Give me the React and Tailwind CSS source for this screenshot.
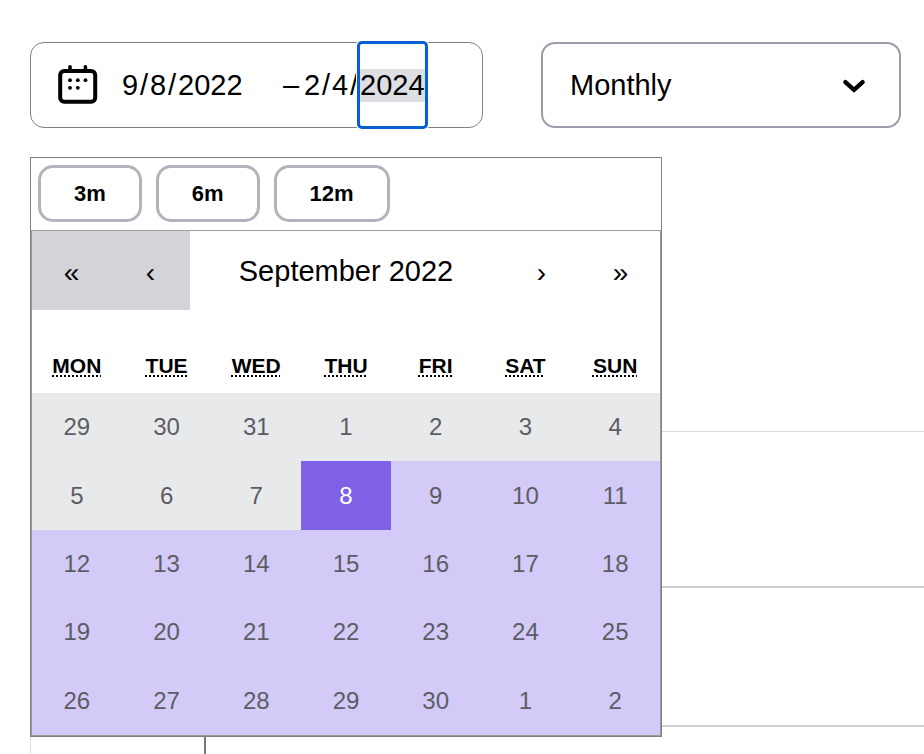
import { useState } from "react";
import clsx from "clsx";

const WEEKDAYS = [
  ["Mon", "Monday"],
  ["Tue", "Tuesday"],
  ["Wed", "Wednesday"],
  ["Thu", "Thursday"],
  ["Fri", "Friday"],
  ["Sat", "Saturday"],
  ["Sun", "Sunday"],
];

const PRESETS = ["3m", "6m", "12m"];

// 5 weeks, first tile is Monday 29 August 2022
const DAYS = Array.from({ length: 35 }, (_, i) => new Date(2022, 7, 29 + i));
const RANGE_START = new Date(2022, 8, 8);

function CalendarIcon() {
  return (
    <svg width="40" height="40" viewBox="0 0 40 40" fill="none" stroke="#000" aria-hidden="true">
      <rect x="2.2" y="6" width="35" height="30.8" rx="4" strokeWidth="4" />
      <path d="M12 1.8v4M27.4 1.8v4" strokeWidth="3.6" strokeLinecap="round" />
      <g fill="#000" stroke="none">
        <circle cx="12" cy="15.2" r="1.9" />
        <circle cx="19.8" cy="15.2" r="1.9" />
        <circle cx="27.5" cy="15.2" r="1.9" />
        <circle cx="12" cy="22.8" r="1.9" />
        <circle cx="19.8" cy="22.8" r="1.9" />
      </g>
    </svg>
  );
}

function DateInput({ label, month, day, year, active }) {
  return (
    <div role="group" aria-label={label} className="flex items-center">
      <input aria-label={`${label} month`} defaultValue={month} className="w-[18px] outline-none" />
      <span className="w-[10px]">/</span>
      <input aria-label={`${label} day`} defaultValue={day} className="w-[18px] outline-none" />
      <span className="w-[10px]">/</span>
      <input
        aria-label={`${label} year`}
        defaultValue={year}
        className={clsx(
          "w-[65px] outline-none",
          active &&
            "relative h-[82px] rounded-[2px] bg-white bg-[linear-gradient(#dedfe3,#dedfe3)] bg-[length:100%_33px] bg-center bg-no-repeat shadow-[0_0_0_3px_#0560d1,0_0_0_4px_#ffffff]"
        )}
      />
    </div>
  );
}

function DateRangeField() {
  return (
    <div className="flex h-[86px] items-center rounded-[14px] border border-[#808080] bg-white pl-[27px] text-[29px] leading-[33px]">
      <button type="button" aria-label="Toggle calendar" className="mr-6">
        <CalendarIcon />
      </button>
      <DateInput label="From" month="9" day="8" year="2022" />
      <span className="ml-10 w-[21px]">–</span>
      <DateInput label="To" month="2" day="4" year="2024" active />
    </div>
  );
}

function NavButton({ label, disabled, children }) {
  return (
    <button
      type="button"
      aria-label={label}
      disabled={disabled}
      className={clsx("h-full w-[79px] pt-1 text-[28px]", disabled && "bg-[#d3d4d8]")}
    >
      {children}
    </button>
  );
}

function Calendar() {
  return (
    <div className="border border-[#9d9d93]">
      <div className="flex h-[79px] items-center">
        <NavButton label="Previous year" disabled>«</NavButton>
        <NavButton label="Previous month" disabled>‹</NavButton>
        <button type="button" className="h-full flex-1 pt-0.5 text-[29px]">September 2022</button>
        <NavButton label="Next month">›</NavButton>
        <NavButton label="Next year">»</NavButton>
      </div>

      <div className="grid h-[83px] grid-cols-7 items-end pb-[14px] text-center text-[21px] leading-[26px] font-bold uppercase">
        {WEEKDAYS.map(([short, full]) => (
          <div key={short}>
            <abbr title={full} className="underline decoration-dotted decoration-2 underline-offset-2">
              {short}
            </abbr>
          </div>
        ))}
      </div>

      <div className="grid h-[342px] grid-cols-7 grid-rows-5 text-[24px]">
        {DAYS.map((date) => {
          const isStart = date.getTime() === RANGE_START.getTime();
          const isBefore = date < RANGE_START;
          return (
            <button
              key={date.getTime()}
              type="button"
              disabled={isBefore}
              className={clsx(
                isStart && "bg-[#7e61e5] text-white",
                isBefore && "bg-[#e8e9eb] text-[#5c5d64]",
                !isStart && !isBefore && "bg-[#d3caf7] text-[#5c5d64]"
              )}
            >
              {date.getDate()}
            </button>
          );
        })}
      </div>
    </div>
  );
}

function CalendarPopup() {
  return (
    <div className="absolute top-full left-0 z-10 mt-[29px] w-[632px] border border-[#808080] bg-white">
      <div className="flex gap-[14px] p-[7px] pb-2">
        {PRESETS.map((preset) => (
          <button
            key={preset}
            type="button"
            className="h-[57px] rounded-[15px] border-[3px] border-[#b2b4bd] px-[33px] text-[22px] font-bold"
          >
            {preset}
          </button>
        ))}
      </div>
      <Calendar />
    </div>
  );
}

function PeriodSelect() {
  const [period, setPeriod] = useState("monthly");
  return (
    <div className="relative w-[360px] shrink-0">
      <select
        aria-label="Period"
        value={period}
        onChange={(e) => setPeriod(e.target.value)}
        className="h-[86px] w-full appearance-none rounded-[14px] border-2 border-[#9a9caa] bg-white pt-0.5 pl-[27px] text-[29px]"
      >
        <option value="monthly">Monthly</option>
        <option value="weekly">Weekly</option>
        <option value="daily">Daily</option>
      </select>
      <svg
        className="pointer-events-none absolute top-[37px] right-[35px]"
        width="24"
        height="14"
        viewBox="0 0 24 14"
        fill="none"
        stroke="#000"
        strokeWidth="4.4"
        strokeLinecap="round"
        aria-hidden="true"
      >
        <path d="M3.4 3.2 12 10.8 20.6 3.2" />
      </svg>
    </div>
  );
}

export default function App() {
  return (
    <div className="flex min-h-screen flex-col overflow-hidden bg-white pt-[42px] pl-[30px] font-['Liberation_Sans',Arial,sans-serif] text-black">
      <div className="flex gap-[58px] pr-[23px]">
        <div className="relative flex-1">
          <DateRangeField />
          <CalendarPopup />
        </div>
        <PeriodSelect />
      </div>

      {/* Report panel, mostly covered by the open calendar */}
      <section className="mt-[303px] flex flex-1 flex-col border-t border-l border-[#dcdcdc]">
        <div className="h-[156px] border-b-2 border-[#d0d0d0]" />
        <div className="h-[139px] border-b-2 border-[#d0d0d0]" />
        <div className="ml-[173px] flex-1 border-l-2 border-[#777777]" />
      </section>
    </div>
  );
}
